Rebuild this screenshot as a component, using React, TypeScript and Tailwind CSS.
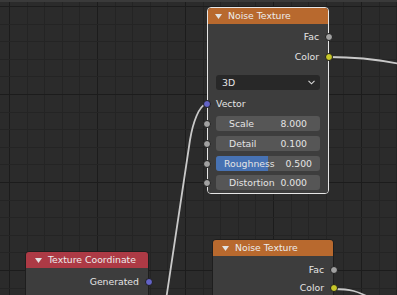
import React from "react";

const font = "font-['DejaVu_Sans',sans-serif]";

function Grid() {
  const xs = Array.from({ length: 23 }, (_, i) => ({ v: Math.round(9 + i * 17.6) + 0.5, major: i % 5 === 0 }));
  const ys = Array.from({ length: 17 }, (_, i) => ({ v: Math.round(6 + i * 17.6) + 0.5, major: i % 5 === 0 }));
  return (
    <svg className="absolute inset-0" width={397} height={295}>
      {xs.map((l) => (
        <line key={"x" + l.v} x1={l.v} x2={l.v} y1={0} y2={295} stroke={l.major ? "#1c1c1c" : "#242424"} strokeWidth={1} />
      ))}
      {ys.map((l) => (
        <line key={"y" + l.v} x1={0} x2={397} y1={l.v} y2={l.v} stroke={l.major ? "#1c1c1c" : "#242424"} strokeWidth={1} />
      ))}
      <path d="M206,104 C199,106 193,122 190,140 L166,300" fill="none" stroke="#c9c9c9" strokeWidth={1.8} />
      <path d="M329,57 C355,57 375,59 400,64" fill="none" stroke="#c9c9c9" strokeWidth={1.8} />
      <path d="M334,289 C350,289 358,291 372,299" fill="none" stroke="#c9c9c9" strokeWidth={1.8} />
    </svg>
  );
}

function Collapse() {
  return (
    <svg width="7" height="5" viewBox="0 0 7 5">
      <path d="M0,0 L7,0 L3.5,5 Z" fill="#e2e2e2" />
    </svg>
  );
}

function Socket({ tone, side }: { tone: string; side: "left" | "right" }) {
  return (
    <span
      className={`absolute top-1/2 -translate-y-1/2 w-[8px] h-[8px] rounded-full border border-[#1e1e1e] ${tone} ${side === "left" ? "left-[-5px]" : "right-[-5px]"}`}
    />
  );
}

function Output({ label, tone, pad = "pr-[9px]", h = "h-[20px]" }: { label: string; tone: string; pad?: string; h?: string }) {
  return (
    <div className={`relative flex items-center justify-end ${h} ${pad}`}>
      <span>{label}</span>
      <Socket tone={tone} side="right" />
    </div>
  );
}

function Field({ label, value, mt, px, fill }: { label: string; value: string; mt: string; px: string; fill?: boolean }) {
  return (
    <div className={`relative ${mt}`}>
      <Socket tone="bg-[#a1a1a1]" side="left" />
      <div className="mx-[8px] relative h-[15px] rounded-[3px] bg-[#565656] overflow-hidden">
        {fill && <div className="absolute inset-y-0 left-0 w-1/2 bg-[#4772b3]" />}
        <div className={`relative flex h-full items-center justify-between ${px}`}>
          <span>{label}</span>
          <span>{value}</span>
        </div>
      </div>
    </div>
  );
}

export default function App() {
  return (
    <div className={`relative w-[397px] h-[295px] overflow-hidden bg-[#2b2b2b] text-[9.3px] text-[#e4e4e4] ${font}`}>
      <Grid />
      <div className="absolute inset-x-0 top-0 h-[2px] bg-[#3a3a3a]" />

      {/* Noise Texture (selected) */}
      <div className="absolute left-[207px] top-[7px] w-[122px] rounded-[4px] border border-[#e6e6e6]">
        <div className="flex h-[16px] items-center gap-[6px] rounded-t-[3px] bg-[#b8692e] pl-[7px] text-[#ececec]">
          <Collapse />
          <span>Noise Texture</span>
        </div>
        <div className="rounded-b-[3px] bg-[#3d3d3d] pt-[3px] pb-[3px]">
          <Output label="Fac" tone="bg-[#a1a1a1]" />
          <Output label="Color" tone="bg-[#c7c729]" />
          <div className="mx-[8px] mt-[8px] flex h-[15px] items-center justify-between rounded-[3px] bg-[#282828] pl-[6px] pr-[5px]">
            <span>3D</span>
            <svg width="7" height="5" viewBox="0 0 7 5">
              <path d="M0.5,0.8 L3.5,3.8 L6.5,0.8" fill="none" stroke="#d8d8d8" strokeWidth={1.1} />
            </svg>
          </div>
          <div className="relative mt-[4px] flex h-[20px] items-center pl-[8px]">
            <Socket tone="bg-[#6363c7]" side="left" />
            <span>Vector</span>
          </div>
          <Field label="Scale" value="8.000" mt="mt-[2px]" px="px-[13px]" />
          <Field label="Detail" value="0.100" mt="mt-[5px]" px="px-[13px]" />
          <Field label="Roughness" value="0.500" mt="mt-[5px]" px="px-[8px]" fill />
          <Field label="Distortion" value="0.000" mt="mt-[4px]" px="px-[13px]" />
        </div>
      </div>

      {/* Texture Coordinate */}
      <div className="absolute left-[25px] top-[251px] w-[124px] rounded-[4px] border border-[#1e1e1e]">
        <div className="flex h-[16px] items-center gap-[6px] rounded-t-[3px] bg-[#ad3a45] pl-[9px] text-[#ececec]">
          <Collapse />
          <span>Texture Coordinate</span>
        </div>
        <div className="bg-[#3d3d3d] pt-[4px] pb-[30px]">
          <Output label="Generated" tone="bg-[#6363c7]" />
        </div>
      </div>

      {/* Noise Texture */}
      <div className="absolute left-[212px] top-[239px] w-[122px] rounded-[4px] border border-[#1e1e1e]">
        <div className="flex h-[16px] items-center gap-[6px] rounded-t-[3px] bg-[#b8692e] pl-[9px] text-[#ececec]">
          <Collapse />
          <span>Noise Texture</span>
        </div>
        <div className="bg-[#3d3d3d] pt-[5px] pb-[20px]">
          <Output label="Fac" tone="bg-[#a1a1a1]" h="h-[18px]" />
          <Output label="Color" tone="bg-[#c7c729]" h="h-[18px]" />
        </div>
      </div>
    </div>
  );
}
